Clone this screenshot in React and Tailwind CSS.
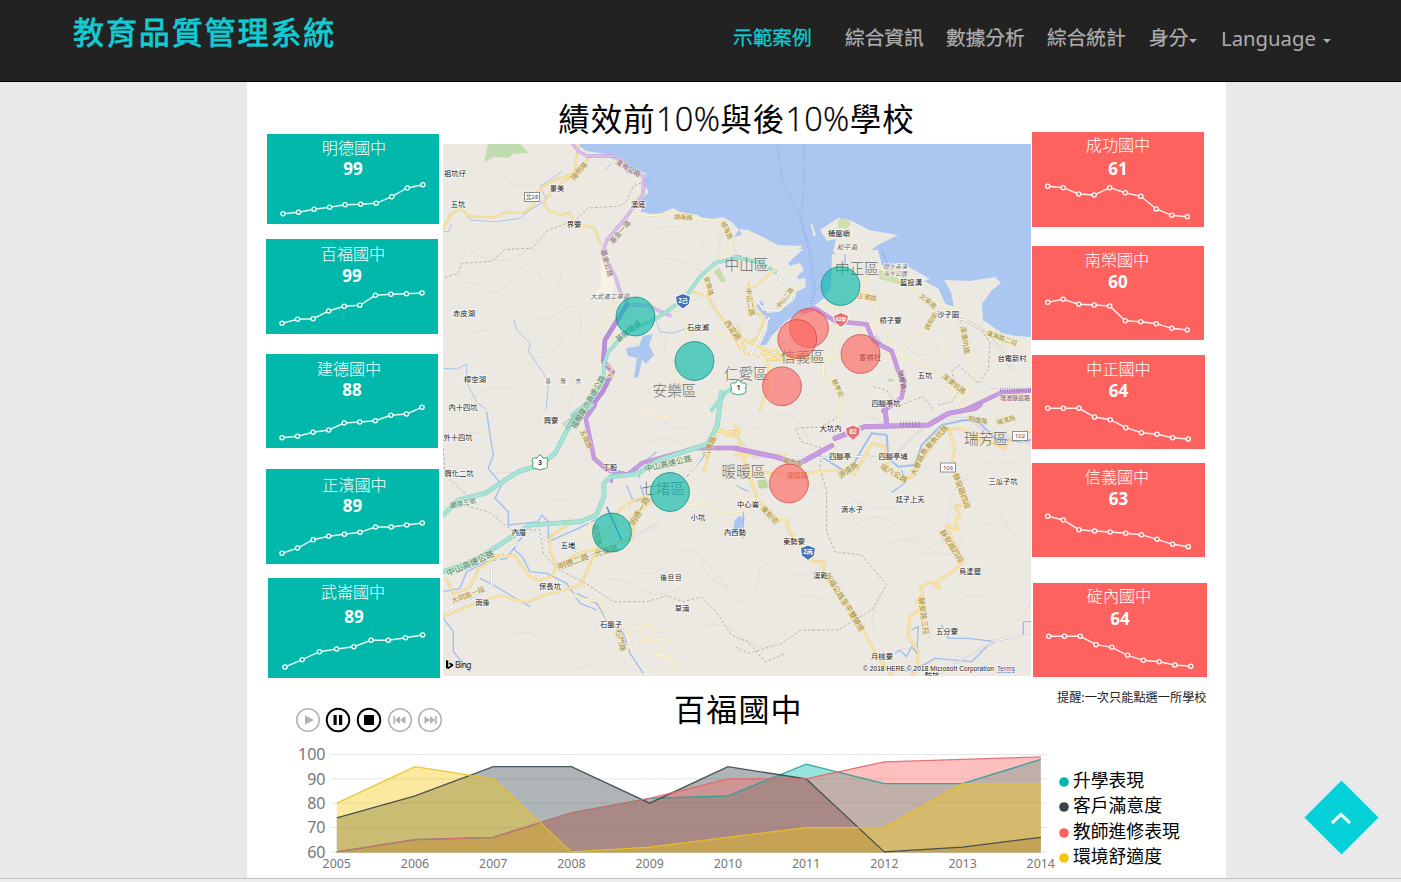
import React from "react";

const CJK = "font-['Noto_Sans','Noto_Sans_CJK_TC',sans-serif]";

const leftCards = [
  { name: "明德國中", value: 99, x: 267, y: 134, w: 172, h: 90, top: 46, box: "ml-5 mt-0.5 w-[172px] h-[90px]", title: "mt-1 pl-0.5", num: "mt-px", x0: 283, x1: 422.8,
    pts: [213.7, 212.3, 209.3, 207.3, 204.7, 204.3, 203.3, 196.7, 188, 184.7] },
  { name: "百福國中", value: 99, x: 266, y: 239, w: 172, h: 95, top: 48, box: "ml-[19px] mt-[15px] w-[172px] h-[95px]", title: "mt-[5px] pl-[2px]", num: "mt-[2px]", x0: 282, x1: 422,
    pts: [323.3, 319.3, 318.7, 311, 306.3, 305.3, 295.3, 294.3, 293.7, 293] },
  { name: "建德國中", value: 88, x: 266, y: 354, w: 172, h: 94, top: 48, box: "ml-[19px] mt-5 w-[172px] h-[94px]", title: "mt-[5px] pr-[6px]", num: "mt-px", x0: 282, x1: 422,
    pts: [437.7, 436.3, 432.3, 430, 423, 422, 420.7, 415.3, 414, 407.3] },
  { name: "正濱國中", value: 89, x: 266, y: 469, w: 173, h: 95, top: 49, box: "ml-[19px] mt-[21px] w-[173px] h-[95px]", title: "mt-[6px] pl-[4px]", num: "mt-px", x0: 282, x1: 422.3,
    pts: [553.3, 548, 539.7, 536.3, 534.3, 532.3, 527, 527, 525, 523] },
  { name: "武崙國中", value: 89, x: 268, y: 578, w: 172, h: 100, top: 52, box: "ml-[21px] mt-[14px] w-[172px] h-[100px]", title: "mt-[4px] pr-[2px]", num: "mt-[5px]", x0: 285, x1: 422.7,
    pts: [667, 659.7, 651.7, 649, 646.7, 640.3, 640.3, 637.7, 635] },
];

const rightCards = [
  { name: "成功國中", value: 61, x: 1032, y: 132, w: 172, h: 95, top: 48, box: "ml-px w-[172px] h-[95px]", title: "mt-[3px]", num: "mt-[4px]", x0: 1047.7, x1: 1187.3,
    pts: [186.3, 187.7, 194, 195, 187.7, 192.7, 196.3, 209, 215.3, 216.7] },
  { name: "南榮國中", value: 60, x: 1032, y: 246, w: 172, h: 94, top: 48, box: "ml-px mt-[19px] w-[172px] h-[94px]", title: "mt-[4px] pr-[2px]", num: "mt-[2px]", x0: 1047.7, x1: 1187.3,
    pts: [302.3, 299.3, 304.3, 305, 306, 320.7, 321.7, 323.7, 328.3, 330] },
  { name: "中正國中", value: 64, x: 1032, y: 355, w: 173, h: 94, top: 48, box: "ml-px mt-[15px] w-[173px] h-[94px]", title: "mt-[4px]", num: "mt-[2px]", x0: 1047.7, x1: 1188.3,
    pts: [408.3, 408.3, 408.3, 417, 419.7, 427.7, 432.7, 434.3, 437.7, 439] },
  { name: "信義國中", value: 63, x: 1032, y: 463, w: 173, h: 94, top: 48, box: "ml-px mt-[14px] w-[173px] h-[94px]", title: "mt-[4px] pr-[3px]", num: "mt-[2px]", x0: 1047.7, x1: 1188.3,
    pts: [516.3, 520, 529.7, 531, 532, 533.3, 534.7, 539.3, 544.3, 546.7] },
  { name: "碇內國中", value: 64, x: 1033, y: 583, w: 174, h: 94, top: 48, box: "ml-[2px] mt-[26px] w-[174px] h-[94px]", title: "mt-[3px] pr-[2px]", num: "mt-[3px]", x0: 1048.7, x1: 1190.7,
    pts: [636.3, 636.3, 636.3, 644.7, 647.3, 655.3, 660.3, 661.7, 665, 666.3] },
];

function SchoolCard({ card, color }) {
  const step = (card.x1 - card.x0) / (card.pts.length - 1);
  const dots = card.pts.map((y, i) => [card.x0 + i * step, y]);
  const height = card.h - card.top;
  return (
    <div className={`flex flex-none flex-col text-center text-white ${color} ${card.box}`}>
      <div className={`h-5 flex-none text-[16.1px] leading-5 font-light ${card.title}`}>{card.name}</div>
      <div className={`h-5 flex-none text-[17px] leading-5 font-bold ${card.num}`}>{card.value}</div>
      <svg className="mt-auto block flex-none" width={card.w} height={height} viewBox={`${card.x} ${card.y + card.top} ${card.w} ${height}`}>
        <polyline points={dots.map((d) => d.join(",")).join(" ")} fill="none" stroke="#fff" strokeOpacity=".9" strokeWidth="1.4" />
        {dots.map(([x, y], i) => (
          <circle key={i} cx={x} cy={y} r="2.1" className={color === "bg-[#01b8aa]" ? "fill-[#01b8aa]" : "fill-[#fd625e]"} stroke="#fff" strokeWidth="1.3" />
        ))}
      </svg>
    </div>
  );
}

const places = [
  ["祖坑仔", 455, 173], ["五坑", 458, 204], ["景美", 557, 188], ["界寮", 574, 224], ["澳底", 638, 204], ["赤皮湖", 464, 313],
  ["石皮瀨", 698, 327], ["樟空湖", 475, 379], ["內十四坑", 463, 407], ["興寮", 551, 420], ["外十四坑", 458, 437.5], ["興化二坑", 459, 473],
  ["丁股", 610, 467], ["內厝", 519, 532], ["五堵", 568, 545.5], ["保長坑", 550, 586], ["雨後", 482.5, 602], ["石盤子", 611, 624],
  ["後旦旦", 671, 577], ["草湳", 682, 608], ["小坑", 698, 517], ["中心崙", 748, 504], ["內西勢", 735, 532], ["東勢寮", 794, 541],
  ["溪乾", 820.5, 575], ["滴水子", 852, 509], ["大坑內", 830.5, 428], ["四腳亭", 840, 456], ["四腳亭埔", 893, 456], ["四腳亭坑", 886, 403],
  ["五坑", 925, 375], ["桶盤嶼", 839, 233], ["藍投溝", 911, 282], ["槓子寮", 890.5, 320], ["沙子園", 948, 314], ["台電新村", 1012, 358],
  ["富嶺社", 870, 357], ["三瓜子坑", 1003, 481], ["尪子上天", 910, 499], ["烏塗窟", 970, 571], ["五分寮", 947, 631], ["月桃寮", 882, 656], ["駝坑", 932, 675],
];

const districts = [
  ["中山區", 746.5, 263.5], ["中正區", 857, 267.5], ["安樂區", 674.5, 389.5], ["仁愛區", 746, 372.5], ["信義區", 803, 355.5],
  ["七堵區", 663, 487.5], ["暖暖區", 743.5, 470.5], ["瑞芳區", 986, 437.5],
];

const roadNames = [
  ["福爾摩沙高速公路", 588, 402, -60, 7.5, "#4a8178"], ["基隆隧道", 628, 331, -38, 7.5, "#4a8178"],
  ["中山高速公路", 668, 463, -13, 8, "#4a8178"], ["中山高速公路", 470, 563, -24, 8.5, "#4a8178"], ["國道三號", 463, 503, -12, 6.5, "#4a8178"],
  ["基金公路", 607, 263, 75, 7, "#846a8d"], ["基金一路", 620, 232, -50, 7, "#846a8d"], ["濱海公路", 628, 168, 30, 7, "#846a8d"],
  ["陽明路", 579, 171, -50, 7, "#a58b45"], ["湖海路", 683, 217, 3, 6.5, "#a58b45"], ["湖海路", 727, 230, 65, 6.5, "#a58b45"], ["安樂路", 709, 286, 75, 6.5, "#a58b45"],
  ["西定路", 733, 330, 55, 7.5, "#a58b45"], ["中山二路", 750, 302, 82, 7, "#a58b45"], ["中山二路", 785, 298, -52, 6, "#a58b45"],
  ["北寧路", 928, 301, 40, 6.5, "#a58b45"], ["調和街", 931, 321, -60, 6.5, "#a58b45"], ["正濱路", 867, 297, 8, 6.5, "#a58b45"], ["濱海路二段", 1002, 338, 20, 6.5, "#a58b45"],
  ["深澳坑路", 965, 340, 82, 7, "#a58b45"], ["深澳坑路", 954, 384, 38, 7, "#a58b45"], ["教孝街", 838, 388, 65, 6.5, "#a58b45"],
  ["明德二路", 573, 561, -20, 8, "#a58b45"], ["光復路", 606, 550, -15, 8, "#a58b45"], ["南興路", 597, 535, 80, 7, "#a58b45"], ["明德一路", 639, 511, -60, 8, "#a58b45"],
  ["八德路", 709, 447, -65, 7.5, "#a58b45"], ["東新街", 770, 515, 46, 7.5, "#a58b45"], ["碇內街", 793, 462, 12, 6.5, "#a58b45"], ["源遠路", 797, 475, 0, 7, "#aa6a40"],
  ["源遠路", 848, 470, -35, 7.5, "#a58b45"], ["瑞八公路", 894, 473, 30, 7.5, "#a58b45"], ["大寮路", 917, 465, -65, 7.5, "#a58b45"], ["魚寮魚坑路", 934, 440, -48, 7.5, "#a58b45"],
  ["明燈路", 978, 420, 10, 6.5, "#a58b45"], ["瑞濱路", 1006, 420, -15, 6.5, "#a58b45"], ["靜安路四段", 962, 491, 70, 7.5, "#a58b45"], ["靜安路四段", 952, 546, 58, 7.5, "#a58b45"],
  ["靜安路三段", 924, 616, 82, 7.5, "#a58b45"], ["新福公路至平雙隧道", 845, 602, 58, 7.5, "#a58b45"], ["石門路", 621, 640, 75, 7.5, "#a58b45"],
  ["大同路一段", 468, 595, -22, 7, "#a58b45"], ["五福路", 586, 439, 66, 6.5, "#a58b45"], ["瑞濱隧道路", 1015, 398, 0, 6, "#765187"],
  ["瑞慶路", 902, 380, 78, 6.5, "#765187"],
];

const L = "#ece9e2";

function Road({ d, w = 5, fill = "#fdf6cf", edge = "#e3d9b4" }) {
  return (
    <g fill="none" strokeLinejoin="round" strokeLinecap="round">
      <path d={d} stroke={edge} strokeWidth={w + 2} />
      <path d={d} stroke={fill} strokeWidth={w} />
    </g>
  );
}

const Amber = (p) => <Road w={4.5} fill="#fbe3a0" edge="#e3c98a" {...p} />;
const Teal = (p) => <Road w={9} fill="#a6e2d6" edge="#7ccabc" {...p} />;
const Purple = (p) => <Road w={9} fill="#c79be1" edge="#b184cb" {...p} />;
const River = ({ d, w = 2.6 }) => <path d={d} fill="none" stroke="#9fbfed" strokeWidth={w} strokeLinejoin="round" />;

function CityMap() {
  return (
    <svg className="block" width="588" height="532" viewBox="443 144 588 532" fontFamily="'Noto Sans','Noto Sans CJK TC',sans-serif">
      <rect x="443" y="144" width="588" height="532" fill={L} />
      {/* subtle ridge lines */}
      <g fill="none" stroke="#dedad0" strokeWidth=".7">
        <path d="M450 290q20-14 34-2t30-12 28 4 20-10M455 345q30-30 60 0t50-10M470 250q30 22 60-2l20 6M470 400q40-30 60 10t45-20M640 280q20-34 50-14t30-30 22 40M650 300q14 24 38 4t30 12M660 420q30 20 44-8M480 480q30-20 60 10t60-20M620 560q30 28 50 0t50 20 40-10M500 640q30-20 50 10t50 10M690 640q20-30 50-4t50-10M760 560q40 30 70 0M850 530q30-30 60 10t40-30 60 20M880 600q-20 30 10 44t40-10M960 600q20-14 40 10t30-8M860 420q20-8 26 12M900 340q20 28 40 4M980 380q20 20 40-4M840 490q30 26 60 16M730 410q20 30 40 10t40 20M590 590q20-20 44-4t50 0M640 450q24-24 50 0" />
        <path d="M560 210q20 28 30 8M500 170q10 20 34 14M520 300q14 30 40 12t20 24M460 430q26 10 34-14M700 560q16 36 40 20M780 620q20-40 50-14M975 530q22-18 44 8M970 450q14 20 44 12M880 550q26-20 50-2t34-12M650 230q40-12 54 18M670 330q-14 20 8 34" />
      </g>
      <path d="M488 144l-4 18 10-5 15 1 4-4 16-1-9-9z" fill="#c0dcb0" />
      {/* sea, western and central coast */}
      <path d="M577 144L586 151 606 154 613 159 622 162 630 170 646 173 644 185 649 192 641 200 641 212 653 214 662 213 673 208 680 212 698 215 706 220 723 217 732 222 739 230 734 237 742 235 739 229 748 230 765 238 778 245 803 246 792 254 779 262 785 267 800 263 804 270 793 280 805 278 806 287 796 292 795 299 779 312 767 313 762 300 756 306 768 321 767 330 760 345 766 345 773 334 786 321 802 312 815 305 824 298 831 288 832 254 845 256 862 251 878 250 882 266 902 263 930 279 924 281 938 288 946 305 954 307 951 292 944 280 970 281 995 277 1001 283 992 290 982 304 983 320 1002 333 1016 336 1031 337 1031 144z" fill="#abc7f1" />
      <path d="M820 230l18-12 14 3 17 9 29 5-22 11-7 7-17 2-10 10-9-14 3-12-9 2z" fill={L} />
      <path d="M838 220l8-2 5 6-4 5-9-1zM879 270l13-3 22 17-4 3-31-8z" fill="#cfe0ac" />
      <path d="M762 311l14-2 20-18 2-16-10-12 14-13-5-3-24 15z" fill={L} />
      <path d="M863 254l14-3 4 15-14 0-8-4z M810 223l4 14 2-2-4-11z" fill={L} />
      <path d="M882 252l8 17M845 254v10" stroke="#8dace0" fill="none" />
      <path d="M777 144l6 40 18 36 8 33 4 40-2 17-45 26M804 144v42l-3 34 10 32 5 38-5 14" fill="none" stroke="#7f9fe0" strokeWidth="1" strokeDasharray="1 2" />
      <path d="M600 262l11-7-4 18 8 5-2 16-13 9-6-7 8-12z" fill="#f7f2e4" />
      <path d="M626 348l13-2 4-10 10-2-4 11 5 10-8 9-4-4-4 18-4-1 3-19-9-2z" fill="#abc7f1" />
      <path d="M714 272l5-5 7 14-4 2zM757 481l9-2 3 8-9 2zM886 381q5-4 9-1l-4 2z" fill="#c7dcaa" />
      <path d="M735 520l4-4 6 2-4 12-9 5z" fill="#abc7f1" />

      {/* north-west quarter, third-of-a-pixel units */}
      <g transform="translate(440 140) scale(.33333)">
        <path d="M430 12l15 20 30 4 25-12 20 14 30 10 6-36z" fill="#abc7f1" />
        <path d="M15 412l40-12 10-30 90-6 40-36 80-3 50-55 80-28 40-38 90-5 22-10 22-50 60-26" fill="none" stroke="#a9a49c" strokeWidth="2.4" strokeDasharray="8 6" />
        <River d="M75 215l15 25 80 5 70-10 30-25 50-30-20-40 65-45M10 275h16l8-22M222 540l8 30 40 40-4 25 60 90-8 85M10 685l40 2 30-15 0 55 30 60 30 22M650 545l10 30 40 5 30-12 40 2M515 70l-20 20" />
        <Amber d="M10 265l20-40 30-20 30 25 75 2 30-15 55 2 30-22 12-42 40-30 70-25 15-88M445 50l-15 30-85 65-35 40 15 25 35 15 30-8 12 35 60 10 20 50" />
        <Amber d="M760 457l42 8 16 34 52 65 30 65" />
        <Road w={4} d="M565 222l75 5 70-8 60 15 70 8 35 45-10 50-60 60-10 70" />
        <Road w={3} d="M465 558l30-4 2-35 35-35M465 558l2 60 28 40M700 515l40 30-5 90-30 50 0 35 60 40 40 5 60 40M820 575l60 20" />
        <Purple w={8} fill="#d9bdea" edge="#bd9dd2" d="M398 12l18 22 25 14 85 0 25 18 10 26 50 16-2 55-55 75-52 60-15 40 38 70 20 60 20 26 60 3 65 30" />
        <Purple w={12} fill="#b890d8" d="M560 495l-65 105-5 65 28 30-30 60-45 58" />
        <Teal d="M900 350l-75 20-45 40-50 70-80 55-90 40-55 60-14 40 0 50-45 60-50 40" />
        <Teal d="M900 735l-40 20-45 55" />
        <path d="M495 670l25 18-14 8 15 12-30 6" fill="none" stroke="#e8d7a0" strokeWidth="5" />
      </g>
      {/* north-east quarter */}
      <g transform="translate(735 140) scale(.33333)">
        <Teal d="M0 350l75 18 46 28" />
        <Amber w={5} d="M10 560l20 80 40 10M40 430l20 90 30 10-20 60-30 20M30 600l60 30 40 30M80 640l160 10M100 660l160-5" />
        <Road w={4} fill="#fff" edge="#c4c0ba" d="M200 328l-70 15-70 80-5 45 30 40 45 5 40-35-8-50-30-10M0 750l70-70-22-38 55-110" />
        <Amber w={5} fill="#fce9a9" d="M60 440l60-50M80 620l20 60 0 60-25 70M80 640l40-10 30 20-50 10" />
        <Road w={4} d="M260 500l40-12 10 20-10 140M380 450l40 20 8 60-10 28-40 10M425 380l80 40 70 60 50 15 40 10 20 30 60 35 60 30 60 15M405 390l-30 60M600 510l-25 60-50 10-25 68-60 2h-180M400 550l60 35 10 40-20 25M295 650l-30 20 0 40 40 30 20 60M500 648l70 30 60 30 30 50 25 52M690 590l20 60 0 60-25 80M620 600l10 40" />
        <path d="M680 560q-20-30 10-20l50 30 60 60 30 60" fill="none" stroke="#b9b5b2" strokeWidth="7" />
        <path d="M680 560q-20-30 10-20l50 30 60 60 30 60" fill="none" stroke="#fff" strokeWidth="4" />
        <path d="M740 570l25 40-5 80-30 40-60-55-20 20 20 60-20 30-40 10M415 740l40 10 30 50 80-30 30 40" fill="none" stroke="#aaa59d" strokeWidth="2.4" strokeDasharray="8 6" />
        <Purple w={11} d="M205 515l35-10 60 38 95 10 20 50 55 30 20 60 18 30-8 50-55 40M685 812l115-55 90-5" />
        <path d="M795 750h95M500 690l10 40-5 25M420 590l15 22" fill="none" stroke="#8458a2" strokeWidth="14" strokeDasharray="3 4" opacity=".45" />
      </g>
      {/* south-west quarter */}
      <g transform="translate(440 405) scale(.33333)">
        <path d="M10 130l5 80 60 55 10 40 60 15 70 55 85 0 10 70 40 45 95 50 75 50 100 0 60-18 50 18 55-14 40 40 50 75 50 20 50 60 60-25" fill="none" stroke="#a9a49c" strokeWidth="2.4" strokeDasharray="8 6" />
        <River d="M140 20l10 70 10 60-15 40 40 50-20 40 40 40 0 40 90-10 10-20 20 20 0 60 90-40 60-30M10 560l50-10 20-50 60-30 60-10 50-70M220 430l30 30 20 40 50 5 60 30 40 60 50 20M120 520l40 20 50 30 60 35M410 565l60 30 30 50 50 40 20 60 40 60M10 640l30 40 0 60 50 60M560 240l20 50 35-10-15-40M600 220l-10-30 60-50M740 215l50-60 10-45 40-30 60 5" w={4} />
        <Road w={4} fill="#fff" edge="#b9b5c2" d="M10 615l80-25 65-50 0-60 70-60 60-35 50 25 55 20 50 20 80-30 130-60M700 240l60-50 40-60 40-50 60-20" />
        <Amber w={5} d="M10 635l110-45 60-18 80 20 50-20 70-20 40-10 60-130 60-100 50-30 60-20M330 390l0 50 20 40-15 35-40 12-30-15-40-60-50 0-60 40-25 55-50 20-20-45" />
        <Amber w={5} d="M355 485l60-40 160-40 15-80 50-40M330 395l60-40 0-15" />
        <Road w={4} d="M380 560l40 20 60 10 20 50 20 20M560 750l10-80 60-10 10 20-40 30 90-10-40 50 40 5 20 40M750 180l0 60-30 50 30 10 60-10 40 35 50-5M410 50l40 80 60 60M450 310l0 70-40 25M550 280l20 50M600 10l60 30 40-10" />
        <Amber w={6} d="M790 200l20-60 20-60 70 0M830 40l10 40 40 15 20-20" />
        <Purple w={11} d="M465 0l-28 40 15 70 10 50 40 35 60 14 45-35 160-45 133 0" />
        <Purple w={6} d="M515 210l0 20" />
        <Teal w={12} d="M455 0l-60 50-50 95-45 35-65 20-100 65-80 20-45 45M10 500l90-30 170-110 150-10 50-20 22-55 0-40 20-20 80-8 60-40 150-50 30-55 12-100" />
        <path d="M375 65l50-40" stroke="#5c8a88" strokeWidth="26" strokeDasharray="3 4" opacity=".45" fill="none" />
        <path d="M545 405l-45-100" stroke="#438bc4" strokeWidth="4" />
      </g>
      {/* south-east quarter */}
      <g transform="translate(735 405) scale(.33333)">
        <path d="M310 35l-50 30-80 5 20 40 60 20-5 60 20 70 0 120 25 60 80 10 75 90-45 75-100 60-110 0-60 40-100 30-40-20" fill="none" stroke="#a9a49c" strokeWidth="2.4" strokeDasharray="8 6" />
        <River w={6} d="M190 180l60-30 90 55 40-70 30-50 45 5 5 70 30 25 50-5 20-60 60-60 70-15 40 5 50 50 80 10 80-15" />
        <River w={4} d="M470 262l40-28-10-40M480 745l15-10 20 20 15-30 15 20 5-80-20 10M530 800l70-40 110 10 50-50 20-10-80-10-60 0-20-40M865 690l0-40 25 0M25 320l0 80M0 240l40 20" />
        <Road w={3} fill="#fff" edge="#b9b5c2" d="M0 90l60 70 300-5 120-5 60-60 60-50 100 0 50 40 60 10 80 30M600 812l100-60 80-45 60-10 50-10" />
        <Amber w={6} d="M0 60l20 80 30 90 20 60 60 55 25 0 5 30 45 60 30 35 30 0 5 40 100 140 60 110 40 50M0 150l150 0M60 200l90 10 150-15 60 10 50-90 40 10 10 60 40 40 30-10 30-50 60-90 60-5 50 30 80 30 25-40 80-20M640 70l20 60-10 45 20 60 30 60-40 10 15 25-15 20 10 25-35-15 20 50 30 60-20 20-60 40 10 20-30-20-30 20 10 20-20 20 20 15-40 30-5 60 30 45-5 50-45 70-20 20" />
        <Road w={4} d="M300 90l-10 80M310 60l0-60M180 250l80-50M0 240l20 40 50 0" />
        <Purple w={13} d="M0 130l120 25 70 22 100-55M300 100l90-35 190-5 60-35 80-15 15-10M450 10l5 50" />
        <path d="M495 58h60" stroke="#8458a2" strokeWidth="18" strokeDasharray="4 5" opacity=".4" />
        <path d="M68 225l25 0 3 25-25 0z" fill="#bcdaa0" />
      </g>

      <g stroke="#fbf3c4" strokeOpacity=".45" strokeWidth="1.6" paintOrder="stroke">
        {roadNames.map(([t, x, y, r, s, c], i) => (
          <text key={i} x={x} y={y} fontSize={s} fill={c} textAnchor="middle" dominantBaseline="central" transform={`rotate(${r} ${x} ${y})`}>{t}</text>
        ))}
      </g>

      {/* route shields */}
      <g textAnchor="middle" dominantBaseline="central" fontSize="6.2" fontWeight="700">
        <path d="M683 293.5l7.5 3-1 7.5-6.5 5-6.5-5-1-7.5z" fill="#4872b4" stroke="#fff" />
        <text x="683" y="300" fill="#fff">2己</text>
        <path d="M808 545l7.5 3-1 7.5-6.5 5-6.5-5-1-7.5z" fill="#4872b4" stroke="#fff" />
        <text x="808" y="551.5" fill="#fff">2丙</text>
        <path d="M841 312.5l7.5 3-1 6.5-6.5 5.5-6.5-5.5-1-6.5z" fill="#e57379" stroke="#fff" />
        <text x="841" y="318.8" fill="#fff" fontSize="5">62甲</text>
        <path d="M853 425l7.5 3-1 6.5-6.5 6-6.5-6-1-6.5z" fill="#e57379" stroke="#fff" />
        <text x="853" y="431.5" fill="#fff">62</text>
        {[[540, 462, "3"], [738.5, 387, "1"]].map(([x, y, t]) => (
          <g key={t}>
            <path d={`M${x - 3} ${y - 4}q3-6 6 0 7-1 4 5 2 6-4 6-3 2-6 0-6 0-4-6-3-6 4-5z`} fill="#fff" stroke="#3ba173" />
            <text x={x} y={y} fill="#333" fontSize="6.5">{t}</text>
          </g>
        ))}
        {[[532, 197, "北28"], [948, 467.5, "106"], [1020, 436, "102"]].map(([x, y, t]) => (
          <g key={t}>
            <rect x={x - 7.5} y={y - 4.5} width="15" height="9" fill="#fff" stroke="#8f8f8f" />
            <text x={x} y={y} fill="#444" fontSize="5.8" fontWeight="400">{t}</text>
          </g>
        ))}
      </g>

      <g textAnchor="middle" dominantBaseline="central" fontSize="7.3" fill="#222" stroke="#fff" strokeOpacity=".7" strokeWidth="1.6" paintOrder="stroke">
        {places.map(([t, x, y], i) => <text key={i} x={x} y={y - 0.5}>{t}</text>)}
        <g fill="#6f6863" fontStyle="italic" fontSize="6.6">
          <text x="610" y="296">大武崙工業區</text>
          <text x="847" y="247" fontSize="7">和平島</text>
          <text x="895" y="267" fontSize="6" fill="#777">碧水巷濱</text>
          <text x="895" y="274" fontSize="6" fill="#777">海水公園</text>
        </g>
        <text x="568" y="380.5" fontSize="5.5" fill="#555" letterSpacing="9.5">基隆市</text>
      </g>
      <g textAnchor="middle" dominantBaseline="central" fontSize="14.6" fontWeight="300" fill="#6e6c69">
        {districts.map(([t, x, y]) => <text key={t} x={x} y={y}>{t}</text>)}
      </g>

      <g fill="#01b8aa" fillOpacity=".62" stroke="#128d84" strokeOpacity=".8">
        {[[635.5, 316.5], [694.5, 361], [840.5, 286], [670, 492], [612, 532.5]].map(([x, y]) => <circle key={x} cx={x} cy={y} r="19.4" />)}
      </g>
      <g fill="#fd625e" fillOpacity=".62" stroke="#c9504d" strokeOpacity=".8">
        {[[809, 328], [797.3, 339], [860.5, 354], [782, 386.3], [789, 483.5]].map(([x, y]) => <circle key={x} cx={x} cy={y} r="19.4" />)}
      </g>

      <path d="M446 660l2.2.8v6.1l3-1.6-1.5-.7-.9-2.2 4.3 1.5v2.2l-4.9 3-2.2-1.2z" fill="#000" />
      <text x="455" y="668.3" fontSize="8.4" fill="#222" textLength="16.5">Bing</text>
      <g fontFamily="'Liberation Sans',sans-serif" fontSize="6.6" stroke="#fff" strokeOpacity=".6" strokeWidth="1.4" paintOrder="stroke">
        <text x="863" y="670.8" fill="#111" textLength="131">© 2018 HERE,© 2018 Microsoft Corporation</text>
        <text x="997" y="670.8" fill="#2b4fa0" textLength="18" textDecoration="underline">Terms</text>
      </g>
    </svg>
  );
}

const series = [
  { name: "升學表現", color: "#01b8aa", line: "#1fa198", data: [60, 65, 66, 76, 82, 83, 96, 88, 88, 98] },
  { name: "客戶滿意度", color: "#374649", line: "#374649", data: [74, 83, 95, 95, 80, 95, 90, 60, 62, 66] },
  { name: "教師進修表現", color: "#fd625e", line: "#e2686a", data: [60, 65, 66, 76, 82, 90, 90, 97, 98, 99] },
  { name: "環境舒適度", color: "#f2c80f", line: "#e8c122", data: [80, 95, 90, 60, 62, 66, 70, 70, 88, 88] },
];

function AreaChart() {
  const px = (i) => 336.8 + i * 78.22;
  const py = (v) => 851.9 - (v - 60) * 2.435;
  const points = (s) => s.data.map((v, i) => `${px(i)},${py(v)}`).join(" ");
  return (
    <svg className="block flex-none" width="810" height="138" viewBox="247 740 810 138" fontFamily="'Noto Sans',sans-serif" fill="#777">
      {[60, 70, 80, 90, 100].map((v) => (
        <g key={v}>
          <line x1="331" x2="1047" y1={py(v)} y2={py(v)} stroke="#e6e6e6" />
          <text x="325.5" y={py(v) + 5.8} fontSize="16" textAnchor="end">{v}</text>
        </g>
      ))}
      {series.map((s) => (
        <polygon key={s.name} points={`${px(0)},852.6 ${points(s)} ${px(9)},852.6`} fill={s.color} fillOpacity=".4" />
      ))}
      {series.map((s) => (
        <polyline key={s.name} points={points(s)} fill="none" stroke={s.line} strokeOpacity=".9" strokeWidth="1.3" />
      ))}
      {series[0].data.map((_, i) => (
        <text key={i} x={px(i)} y="868" fontSize="12.4" textAnchor="middle">{2005 + i}</text>
      ))}
    </svg>
  );
}

function PlayerButton({ active, children }) {
  const c = active ? "#000" : "#b3b3b3";
  return (
    <svg className="block flex-none" width="26" height="26" viewBox="-13 -13 26 26" fill={c}>
      <circle r="11.3" fill="#fff" stroke={c} strokeWidth={active ? 1.9 : 1.6} />
      {children}
    </svg>
  );
}

const Caret = ({ className }) => (
  <svg className={className} width="8" height="4" viewBox="0 0 8 4"><path d="M0 0h8L4 4z" fill="currentColor" /></svg>
);

const Percent = () => (
  <span className="font-['Open_Sans','Noto_Sans',sans-serif] text-[32.5px] font-light tracking-[0.3px] [-webkit-text-stroke:0.3px_black]">10%</span>
);

export default function App() {
  return (
    <div className={`flex h-[882px] w-[1401px] flex-col overflow-hidden bg-[#e9e9e9] ${CJK}`}>
      <header className="flex h-[82px] flex-none border-b border-black bg-[#222]">
        <h1 className="ml-[73px] w-[660px] pt-[10px] text-[31px] leading-[44px] tracking-[1.9px] whitespace-nowrap text-[#12cbd3] [-webkit-text-stroke:0.8px_#12cbd3]">教育品質管理系統</h1>
        <nav className="flex items-start pt-[24px] text-[19.7px] leading-[28px] whitespace-nowrap text-[#adadad] [-webkit-text-stroke:0.25px_currentColor]">
          <a className="w-[112px] text-[#12cbd3]">示範案例</a>
          <a className="w-[101px]">綜合資訊</a>
          <a className="w-[101px]">數據分析</a>
          <a className="w-[102px]">綜合統計</a>
          <a className="flex w-[72px] items-center">身分<Caret className="mt-[5px] ml-[1px]" /></a>
          <a className="flex items-center text-[20.3px] [-webkit-text-stroke:0px]">Language<Caret className="mt-[5px] ml-[7px]" /></a>
        </nav>
      </header>

      <main className="ml-[247px] flex h-[796px] w-[979px] flex-none flex-col bg-white">
        <h2 className="h-[50px] flex-none pt-[15px] text-center text-[31.5px] leading-[44px] tracking-[1.1px] whitespace-nowrap text-black">績效前<Percent />與後<Percent />學校</h2>
        <section className="flex h-[548px] flex-none">
          <div className="flex w-[196px] flex-none flex-col">
            {leftCards.map((c) => <SchoolCard key={c.name} card={c} color="bg-[#01b8aa]" />)}
          </div>
          <div className="w-[588px] flex-none pt-3"><CityMap /></div>
          <div className="flex flex-none flex-col">
            {rightCards.map((c) => <SchoolCard key={c.name} card={c} color="bg-[#fd625e]" />)}
          </div>
        </section>

        <section className="flex h-[60px] flex-none">
          <div className="flex w-[427px] flex-none gap-[4.7px] pt-[27px] pl-[47.6px]">
            <PlayerButton><path d="M-3-4.8L6 0-3 4.8z" /></PlayerButton>
            <PlayerButton active><path d="M-4.5-5h3.2V5h-3.2zM1-5h3.2V5H1z" /></PlayerButton>
            <PlayerButton active><path d="M-5-5H5V5H-5z" /></PlayerButton>
            <PlayerButton><path d="M-6.6-4h1.6v8h-1.6zM-5 0L0-4V4zM0 0l5.5-4v8z" /></PlayerButton>
            <PlayerButton><path d="M6.6-4H5v8h1.6zM5 0L0-4V4zM0 0l-5.5-4v8z" /></PlayerButton>
          </div>
          <h2 className="w-[383px] pt-[7px] text-[31px] leading-[44px] tracking-[1.2px] whitespace-nowrap text-black">百福國中</h2>
          <p className="pt-[10px] text-[12.2px] leading-4 whitespace-nowrap text-[#222]">提醒:一次只能點選一所學校</p>
        </section>

        <section className="flex h-[138px] flex-none">
          <AreaChart />
          <ul className="flex flex-col pt-[28px] pl-[2px]">
            {series.map((s) => (
              <li key={s.name} className="flex h-[25.3px] items-center gap-[4px] text-[17.8px] leading-[25px] whitespace-nowrap text-black">
                <svg className="mt-[3px] flex-none" width="10" height="10" viewBox="0 0 10 10"><circle cx="5" cy="5" r="4.8" fill={s.color} /></svg>
                {s.name}
              </li>
            ))}
          </ul>
        </section>
      </main>
      <footer className="h-1 flex-none border-t border-[#c3c3c3] bg-[#ececec]" />

      <button className="absolute top-[779px] left-[1303px]" aria-label="Top">
        <svg className="block" width="77" height="77" viewBox="0 0 77 77">
          <path d="M38.5 1L76 38.5 38.5 76 1 38.5z" fill="#06d0d8" stroke="#e4fbfc" strokeWidth=".8" />
          <path d="M29 44l9-8.6 9 8.6" fill="none" stroke="#eafcfc" strokeWidth="3.2" />
        </svg>
      </button>
    </div>
  );
}
